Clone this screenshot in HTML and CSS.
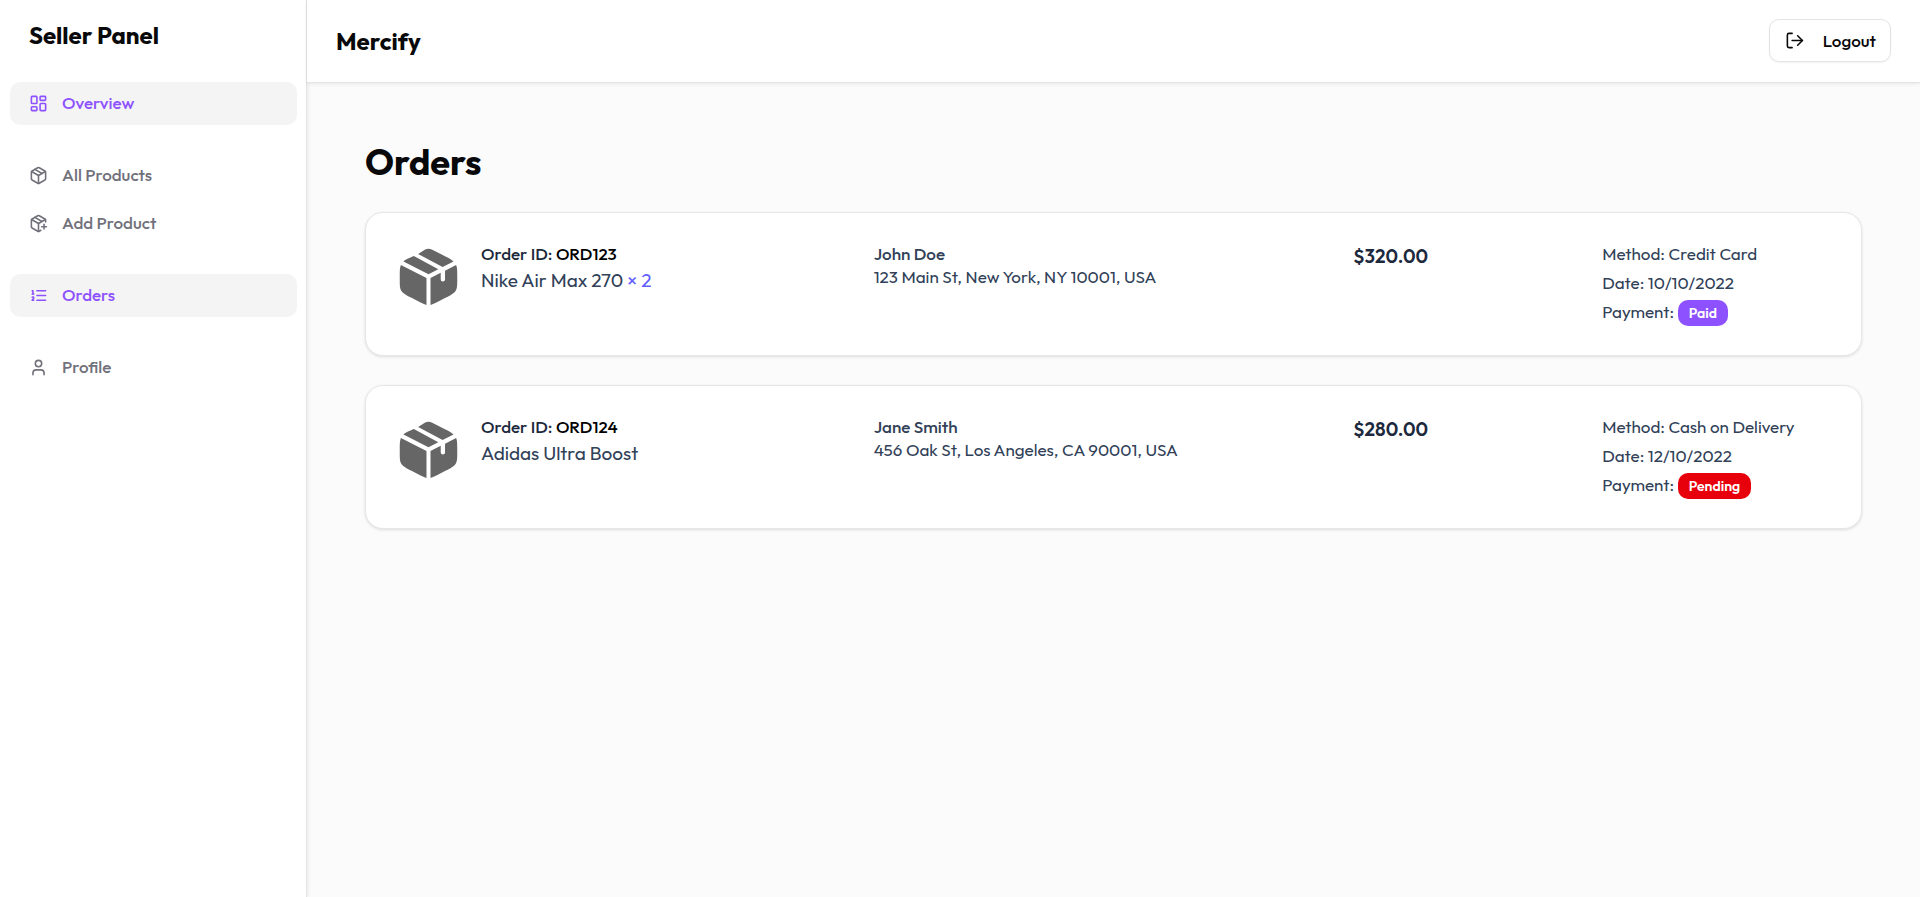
FILE: index.html
```html
<!DOCTYPE html>
<html lang="en">
<head>
<meta charset="utf-8">
<title>Mercify – Orders</title>
<link rel="stylesheet" href="styles.css">
</head>
<body>
<div class="app">
  <aside class="sidebar">
    <h2 class="sidebar-title">Seller Panel</h2>
    <nav class="nav">
      <div class="nav-group">
        <a class="nav-link active" href="#overview"><svg class="icon" viewBox="0 0 24 24"><rect width="7" height="9" x="3" y="3" rx="1"/><rect width="7" height="5" x="14" y="3" rx="1"/><rect width="7" height="9" x="14" y="12" rx="1"/><rect width="7" height="5" x="3" y="16" rx="1"/></svg>Overview</a>
      </div>
      <div class="nav-group">
        <a class="nav-link" href="#products"><svg class="icon" viewBox="0 0 24 24"><path d="M11 21.73a2 2 0 0 0 2 0l7-4A2 2 0 0 0 21 16V8a2 2 0 0 0-1-1.73l-7-4a2 2 0 0 0-2 0l-7 4A2 2 0 0 0 3 8v8a2 2 0 0 0 1 1.73z"/><path d="M12 22V12"/><path d="m3.3 7 8.7 5 8.7-5"/><path d="m7.5 4.27 9 5.15"/></svg>All Products</a>
        <a class="nav-link" href="#add"><svg class="icon" viewBox="0 0 24 24"><path d="M16 16h6"/><path d="M19 13v6"/><path d="M21 10V8a2 2 0 0 0-1-1.73l-7-4a2 2 0 0 0-2 0l-7 4A2 2 0 0 0 3 8v8a2 2 0 0 0 1 1.73l7 4a2 2 0 0 0 2 0l2-1.14"/><path d="m7.5 4.27 9 5.15"/><path d="M3.29 7 12 12l8.71-5"/><path d="M12 22V12"/></svg>Add Product</a>
      </div>
      <div class="nav-group">
        <a class="nav-link active" href="#orders"><svg class="icon" viewBox="0 0 24 24"><path d="M10 12h11"/><path d="M10 18h11"/><path d="M10 6h11"/><path d="M4 10h2"/><path d="M4 6h1v4"/><path d="M6 18H4c0-1 2-2 2-3s-1-1.5-2-1"/></svg>Orders</a>
      </div>
      <div class="nav-group">
        <a class="nav-link" href="#profile"><svg class="icon" viewBox="0 0 24 24"><path d="M19 21v-2a4 4 0 0 0-4-4H9a4 4 0 0 0-4 4v2"/><circle cx="12" cy="7" r="4"/></svg>Profile</a>
      </div>
    </nav>
  </aside>
  <div class="content">
    <header class="topbar">
      <a class="brand" href="#home">Mercify</a>
      <button class="logout" type="button"><svg class="icon" viewBox="0 0 24 24"><path d="M9 21H5a2 2 0 0 1-2-2V5a2 2 0 0 1 2-2h4"/><path d="M9 12h13"/><path d="m16 6 6 6-6 6"/></svg>Logout</button>
    </header>
    <main class="main">
      <h1 class="page-title">Orders</h1>
      <div class="orders">
        <article class="order">
          <div class="item">
            <svg class="box-icon" viewBox="0 0 24 24"><use href="#box"/></svg>
            <div>
              <p class="order-id">Order ID: <span class="code">ORD123</span></p>
              <p class="product">Nike Air Max 270 <span class="qty">× 2</span></p>
            </div>
          </div>
          <div class="customer">
            <p class="name">John Doe</p>
            <p>123 Main St, New York, NY 10001, USA</p>
          </div>
          <p class="price">$320.00</p>
          <div class="payment">
            <p>Method: Credit Card</p>
            <p>Date: 10/10/2022</p>
            <p>Payment: <span class="badge">Paid</span></p>
          </div>
        </article>
        <article class="order">
          <div class="item">
            <svg class="box-icon" viewBox="0 0 24 24"><use href="#box"/></svg>
            <div>
              <p class="order-id">Order ID: <span class="code">ORD124</span></p>
              <p class="product">Adidas Ultra Boost</p>
            </div>
          </div>
          <div class="customer">
            <p class="name">Jane Smith</p>
            <p>456 Oak St, Los Angeles, CA 90001, USA</p>
          </div>
          <p class="price">$280.00</p>
          <div class="payment">
            <p>Method: Cash on Delivery</p>
            <p>Date: 12/10/2022</p>
            <p>Payment: <span class="badge pending">Pending</span></p>
          </div>
        </article>
      </div>
    </main>
  </div>
</div>
<svg class="defs" aria-hidden="true">
  <symbol id="box" viewBox="0 0 24 24">
    <path d="M8.4 4.2 10.7 2.7C11.6 2.2 12.4 2.2 13.3 2.7L17.9 5C19.3 5.7 20 6.1 20.7 6.8L16.9 8.7Z"/>
    <path d="M6.9 4.9 15.4 9.5 12 11.2 3.3 6.8C4 6.1 4.4 6 6.9 4.9Z"/>
    <path d="M2.4 8 11.3 12.5V21.9C10.4 21.7 9.6 21.2 8.9 20.9L6.1 19.4C4.2 18.4 3.2 17.9 2.6 17 2 16.1 2 15 2 13V11.9C2 10 2 9 2.4 8Z"/>
    <path d="M21.6 8C22 9 22 10 22 11.9V13C22 15 22 16.1 21.4 17 20.8 17.9 19.8 18.4 17.9 19.4L15.1 20.9C14.4 21.2 13.6 21.7 12.7 21.9V12.5L16.25 10.7V13A.75.75 0 0 0 17.75 13V9.96Z"/>
  </symbol>
</svg>
</body>
</html>
```
FILE: styles.css
```css
* { box-sizing: border-box; }
body, h1, h2, p { margin: 0; }
body {
  font-family: Outfit, Lato, sans-serif;
  font-size: 17px;
  line-height: 24px;
  color: #09090b;
  background: #fbfbfb;
}
a { color: inherit; text-decoration: none; }
.app { display: flex; min-height: 100vh; }
.sidebar {
  flex: 0 0 307px;
  padding: 19px 9px 19px 10px;
  background: #fff;
  border-right: 1px solid #e4e4e7;
  box-shadow: 1px 0 4px rgba(0, 0, 0, .08);
}
.sidebar-title { padding-left: 19px; font-size: 24px; line-height: 32px; font-weight: 700; }
.nav { display: flex; flex-direction: column; gap: 29px; margin-top: 31px; }
.nav-group { display: flex; flex-direction: column; gap: 5px; }
.nav-link {
  display: flex;
  align-items: center;
  gap: 14px;
  padding: 9px 19px 10px;
  border-radius: 10px;
  font-weight: 500;
  color: #71717b;
}
.nav-link.active { background: #f4f4f5; color: #8e51ff; }
.icon {
  width: 19px;
  height: 19px;
  fill: none;
  stroke: currentColor;
  stroke-width: 2;
  stroke-linecap: round;
  stroke-linejoin: round;
}
.content { flex: 1; min-width: 0; }
.topbar {
  display: flex;
  align-items: center;
  justify-content: space-between;
  padding: 19px 29px 20px;
  background: #fff;
  border-bottom: 1px solid #e4e4e7;
  box-shadow: 0 1px 4px rgba(0, 0, 0, .08);
}
.brand { font-size: 24px; font-weight: 700; }
.logout {
  display: flex;
  align-items: center;
  gap: 19px;
  height: 43px;
  padding: 0 14px 0 15px;
  border: 1px solid #e4e4e7;
  border-radius: 10px;
  background: #fff;
  color: inherit;
  font: inherit;
  font-weight: 500;
  box-shadow: 0 1px 2px rgba(0, 0, 0, .05);
}
.main { padding: 57px 58px; }
.page-title { font-size: 36px; line-height: 43px; font-weight: 700; }
.orders { display: flex; flex-direction: column; gap: 29px; margin-top: 29px; }
.order {
  display: grid;
  grid-template-columns: 2fr 2fr 1fr 1fr;
  gap: 18px;
  padding: 29px 28px;
  background: #fff;
  border: 1px solid #e5e7eb;
  border-radius: 18px;
  box-shadow: 0 1px 3px rgba(0, 0, 0, .12);
  color: #314158;
}
.item { display: flex; gap: 18px; }
.box-icon { flex: none; width: 69px; height: 69px; fill: #666; }
.order-id { font-weight: 500; color: #1d293d; }
.code { color: #000; }
.product { font-size: 19px; line-height: 29px; }
.qty { color: #615fff; }
.customer { line-height: 23px; }
.name { font-weight: 500; }
.price { font-size: 19px; line-height: 29px; font-weight: 600; color: #1d293d; }
.payment { display: flex; flex-direction: column; gap: 5px; }
.badge {
  display: inline-block;
  padding: 1px 11px;
  border-radius: 10px;
  background: #8e51ff;
  color: #fff;
  font-size: 14px;
  font-weight: 600;
}
.badge.pending { background: #e7000b; }
.defs { display: none; }
```
